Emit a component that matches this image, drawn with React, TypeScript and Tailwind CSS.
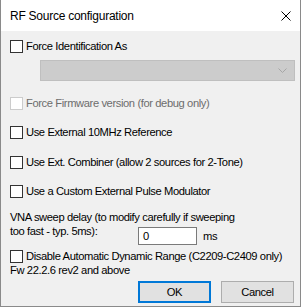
import { ReactNode } from 'react'

const font = { fontFamily: '"Liberation Sans", Arial, sans-serif' }

const CheckBox = ({ disabled }: { disabled?: boolean }) => (
    <span
        className={
            'block w-[13px] h-[13px] shrink-0 border bg-white ' +
            (disabled ? 'border-[#cccccc]' : 'border-[#333333]')
        }
    />
)

const CheckRow = ({
    label,
    disabled,
    className,
}: {
    label: ReactNode
    disabled?: boolean
    className?: string
}) => (
    <div className={'flex items-center ' + (className ?? '')}>
        <CheckBox disabled={disabled} />
        <span
            className={
                'ml-[3px] whitespace-nowrap ' +
                (disabled ? 'text-[#6d6d6d]' : 'text-black')
            }
        >
            {label}
        </span>
    </div>
)

export default function App() {
    return (
        <div
            className="w-[302px] h-[308px] bg-white text-[11.2px] leading-[14px] tracking-[-0.4px]"
            style={font}
        >
            <div className="w-[301px] h-[307px] flex flex-col border-x border-b border-[#8a8a8a]">
                {/* Title bar */}
                <div className="h-[31px] shrink-0 bg-white flex items-center justify-between pl-[9px] pr-[9px]">
                    <span className="text-[12px] tracking-[-0.25px] text-black">
                        RF Source configuration
                    </span>
                    <svg width="10" height="10" viewBox="0 0 10 10">
                        <path d="M0.5 0.5 L9.5 9.5 M9.5 0.5 L0.5 9.5" stroke="#000" strokeWidth="1" />
                    </svg>
                </div>

                {/* Body */}
                <div className="flex-1 bg-[#f0f0f0] pl-[9px] flex flex-col">
                    <CheckRow label="Force Identification As" className="h-[18px] mt-[6px]" />

                    <div className="ml-[30px] mt-[5px] w-[255px] h-[21px] bg-[#cccccc] border border-[#bfbfbf] flex items-center justify-end pr-[7px]">
                        <svg width="9" height="5" viewBox="0 0 9 5">
                            <path d="M0.5 0.5 L4.5 4.5 L8.5 0.5" stroke="#a6a6a6" fill="none" />
                        </svg>
                    </div>

                    <CheckRow
                        disabled
                        label="Force Firmware version (for debug only)"
                        className="h-[18px] mt-[13px]"
                    />
                    <CheckRow label="Use External 10MHz Reference" className="h-[18px] mt-[11px]" />
                    <CheckRow
                        label="Use Ext. Combiner (allow 2 sources for 2-Tone)"
                        className="h-[18px] mt-[12px]"
                    />
                    <CheckRow
                        label="Use a Custom External Pulse Modulator"
                        className="h-[18px] mt-[11px]"
                    />

                    {/* VNA sweep delay */}
                    <div className="mt-[10px] whitespace-nowrap">
                        VNA sweep delay (to modify carefully if sweeping
                    </div>
                    <div className="flex items-start">
                        <span className="w-[128px] whitespace-nowrap">too fast - typ. 5ms):</span>
                        <div className="mt-[3px] w-[59px] h-[18px] bg-white border border-[#7a7a7a] flex items-center pl-[4px]">
                            0
                        </div>
                        <span className="ml-[6px] mt-[5px]">ms</span>
                    </div>

                    <CheckRow
                        label="Disable Automatic Dynamic Range (C2209-C2409 only)"
                        className="h-[14px] mt-[4px]"
                    />
                    <div className="whitespace-nowrap">Fw 22.2.6 rev2 and above</div>

                    <div className="flex ml-[128px] mt-[4px] gap-[10px]">
                        <button className="w-[73px] h-[22px] bg-[#e1e1e1] border-2 border-[#0078d7] text-black">
                            OK
                        </button>
                        <button className="w-[73px] h-[22px] bg-[#e1e1e1] border border-[#adadad] text-black">
                            Cancel
                        </button>
                    </div>
                </div>
            </div>
        </div>
    )
}
